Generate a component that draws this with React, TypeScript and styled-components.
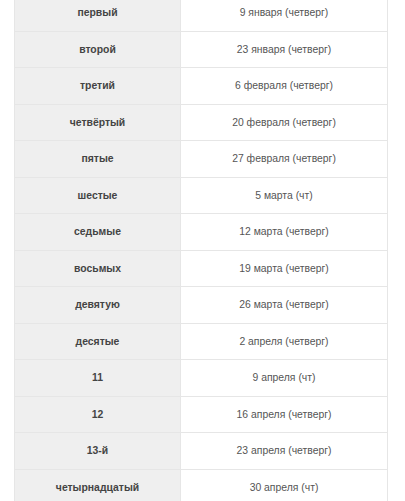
import React from "react";
import styled, { createGlobalStyle } from "styled-components";

const Global = createGlobalStyle`
  html, body { margin: 0; padding: 0; background: #ffffff; overflow: hidden; }
  body { font-family: "Liberation Sans", Arial, sans-serif; }
`;

const Page = styled.div`
  padding: 0 17px 0 14px;
  margin-top: -6px;
`;

const Table = styled.table`
  width: 374px;
  border-collapse: collapse;
  table-layout: fixed;
  font-size: 10.4px;
`;

const Row = styled.tr``;

const Cell = styled.td<{ $head?: boolean }>`
  border: 1px solid #e6e6e6;
  padding: 10px 8px;
  line-height: 15.5px;
  text-align: center;
  color: ${(p) => (p.$head ? "#444444" : "#555555")};
  font-weight: ${(p) => (p.$head ? 700 : 400)};
  background: ${(p) => (p.$head ? "#efefef" : "#ffffff")};
  width: ${(p) => (p.$head ? "149px" : "auto")};
`;

const rows: [string, string][] = [
  ["первый", "9 января (четверг)"],
  ["второй", "23 января (четверг)"],
  ["третий", "6 февраля (четверг)"],
  ["четвёртый", "20 февраля (четверг)"],
  ["пятые", "27 февраля (четверг)"],
  ["шестые", "5 марта (чт)"],
  ["седьмые", "12 марта (четверг)"],
  ["восьмых", "19 марта (четверг)"],
  ["девятую", "26 марта (четверг)"],
  ["десятые", "2 апреля (четверг)"],
  ["11", "9 апреля (чт)"],
  ["12", "16 апреля (четверг)"],
  ["13-й", "23 апреля (четверг)"],
  ["четырнадцатый", "30 апреля (чт)"],
];

export default function App() {
  return (
    <>
      <Global />
      <Page>
        <Table>
          <tbody>
            {rows.map(([a, b]) => (
              <Row key={a}>
                <Cell $head>{a}</Cell>
                <Cell>{b}</Cell>
              </Row>
            ))}
          </tbody>
        </Table>
      </Page>
    </>
  );
}
